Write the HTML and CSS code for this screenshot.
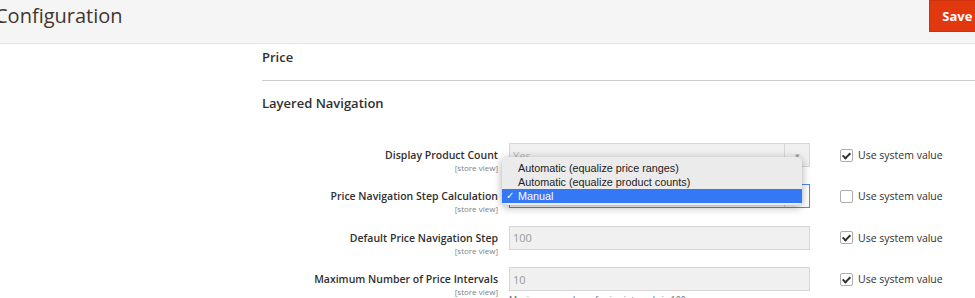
FILE: index.html
```html
<!doctype html>
<html>
  <head>
    <title>Configuration</title>
    <link rel="stylesheet" href="styles.css">
  </head>
  <body>
    <header class="page-header">
      <h1 class="page-title">Configuration</h1>
      <button class="btn-save">Save Config</button>
    </header>

    <main class="config">
      <div class="section-title section-closed">Price</div>
      <div class="section-title">Layered Navigation</div>

      <div class="fields">
        <div class="field-row">
          <div class="field-label">
            <span class="label-text">Display Product Count</span>
            <span class="scope">[store view]</span>
          </div>
          <div class="field-control">
            <div class="select disabled">
              <span class="select-value">Yes</span>
              <span class="select-arrow">&#9662;</span>
            </div>
          </div>
          <label class="use-default">
            <span class="checkbox checked"></span>
            Use system value
          </label>
        </div>

        <div class="field-row">
          <div class="field-label">
            <span class="label-text">Price Navigation Step Calculation</span>
            <span class="scope">[store view]</span>
          </div>
          <div class="field-control">
            <div class="select focused">
              <span class="select-value">Manual</span>
              <span class="select-arrow">&#9662;</span>
            </div>
            <ul class="dropdown">
              <li>Automatic (equalize price ranges)</li>
              <li>Automatic (equalize product counts)</li>
              <li class="selected"><span class="tick">&#10003;</span>Manual</li>
            </ul>
          </div>
          <label class="use-default">
            <span class="checkbox"></span>
            Use system value
          </label>
        </div>

        <div class="field-row">
          <div class="field-label">
            <span class="label-text">Default Price Navigation Step</span>
            <span class="scope">[store view]</span>
          </div>
          <div class="field-control">
            <div class="input disabled">100</div>
          </div>
          <label class="use-default">
            <span class="checkbox checked"></span>
            Use system value
          </label>
        </div>

        <div class="field-row">
          <div class="field-label">
            <span class="label-text">Maximum Number of Price Intervals</span>
            <span class="scope">[store view]</span>
          </div>
          <div class="field-control">
            <div class="input disabled">10</div>
            <p class="note">Maximum number of price intervals is 100</p>
          </div>
          <label class="use-default">
            <span class="checkbox checked"></span>
            Use system value
          </label>
        </div>
      </div>
    </main>
  </body>
</html>
```

FILE: styles.css
```css
body {
  margin: 0;
  padding: 0;
  height: 298px;
  overflow: hidden;
  font-family: "Open Sans", Arial, sans-serif;
  color: #303030;
  background: #fff;
}

.page-header {
  display: flex;
  justify-content: space-between;
  align-items: flex-start;
  height: 43px;
  background: #f5f5f5;
  border-bottom: 1px solid #e3e3e3;
  overflow: hidden;
}

.page-title {
  margin: 0 0 0 -5px;
  font-size: 20px;
  font-weight: 400;
  line-height: 31px;
  color: #41362f;
}

.btn-save {
  flex-shrink: 0;
  height: 32px;
  margin-right: -55px;
  padding: 0 12px;
  background: #e2380f;
  border: 1px solid #d0330d;
  color: #fff;
  font-family: "Open Sans", Arial, sans-serif;
  font-size: 13px;
  font-weight: 700;
}

.config {
  padding-left: 262px;
}

.section-title {
  padding: 4px 0 14px;
  font-size: 13px;
  font-weight: 600;
  line-height: 18px;
  color: #303030;
}

.section-closed {
  border-bottom: 1px solid #cccccc;
}

.section-title + .section-title {
  padding-top: 13px;
}

.fields {
  margin-top: 17px;
  margin-left: -262px;
}

.field-row {
  display: flex;
  align-items: flex-start;
  height: 24px;
  margin-bottom: 17.4px;
}

.field-label {
  width: 498px;
  display: flex;
  flex-direction: column;
  align-items: flex-end;
  padding-top: 4px;
}

.label-text {
  font-size: 10.5px;
  font-weight: 600;
  line-height: 16px;
}

.scope {
  font-size: 8px;
  line-height: 9px;
  color: #808080;
}

.field-control {
  position: relative;
  width: 301px;
  margin-left: 11px;
}

.select,
.input {
  box-sizing: border-box;
  height: 24px;
  display: flex;
  align-items: center;
  font-size: 11px;
  border: 1px solid #d6d6d6;
  background: #f0f0f0;
}

.input {
  padding-left: 3px;
  color: #9a9a9a;
}

.select-value {
  flex: 1;
  padding-left: 3px;
  color: #b5b5b5;
}

.select-arrow {
  width: 24px;
  align-self: stretch;
  display: flex;
  align-items: center;
  justify-content: center;
  border-left: 1px solid #d6d6d6;
  color: #a0a0a0;
  font-size: 9px;
}

.select.focused {
  background: #fff;
  border-color: #4a8fe7;
}

.select.focused .select-value {
  color: #303030;
}

.dropdown {
  position: absolute;
  left: -7px;
  top: -27px;
  width: 300px;
  margin: 0;
  padding: 4px 0 2px;
  list-style: none;
  box-sizing: border-box;
  background: #ebebeb;
  border-radius: 5px;
  box-shadow: 0 2px 8px rgba(0, 0, 0, 0.35);
  font-family: "Liberation Sans", Arial, sans-serif;
  font-size: 10.8px;
  z-index: 2;
}

.dropdown li {
  position: relative;
  height: 14px;
  line-height: 14px;
  padding-left: 16px;
  color: #222;
}

.dropdown li.selected {
  background: #3478f6;
  color: #fff;
}

.tick {
  position: absolute;
  left: 4px;
  font-size: 10px;
}

.note {
  margin: 2px 0 0;
  font-size: 9px;
  color: #666;
}

.use-default {
  display: flex;
  align-items: center;
  gap: 5px;
  height: 24px;
  margin-left: 30px;
  font-size: 10.5px;
  color: #303030;
}

.checkbox {
  box-sizing: border-box;
  width: 13px;
  height: 13px;
  border: 1px solid #adadad;
  border-radius: 2px;
  background: #fff;
  position: relative;
}

.checkbox.checked::after {
  content: "";
  position: absolute;
  left: 3px;
  top: 1px;
  width: 3px;
  height: 6px;
  border: solid #303030;
  border-width: 0 2px 2px 0;
  transform: rotate(45deg);
}
```
